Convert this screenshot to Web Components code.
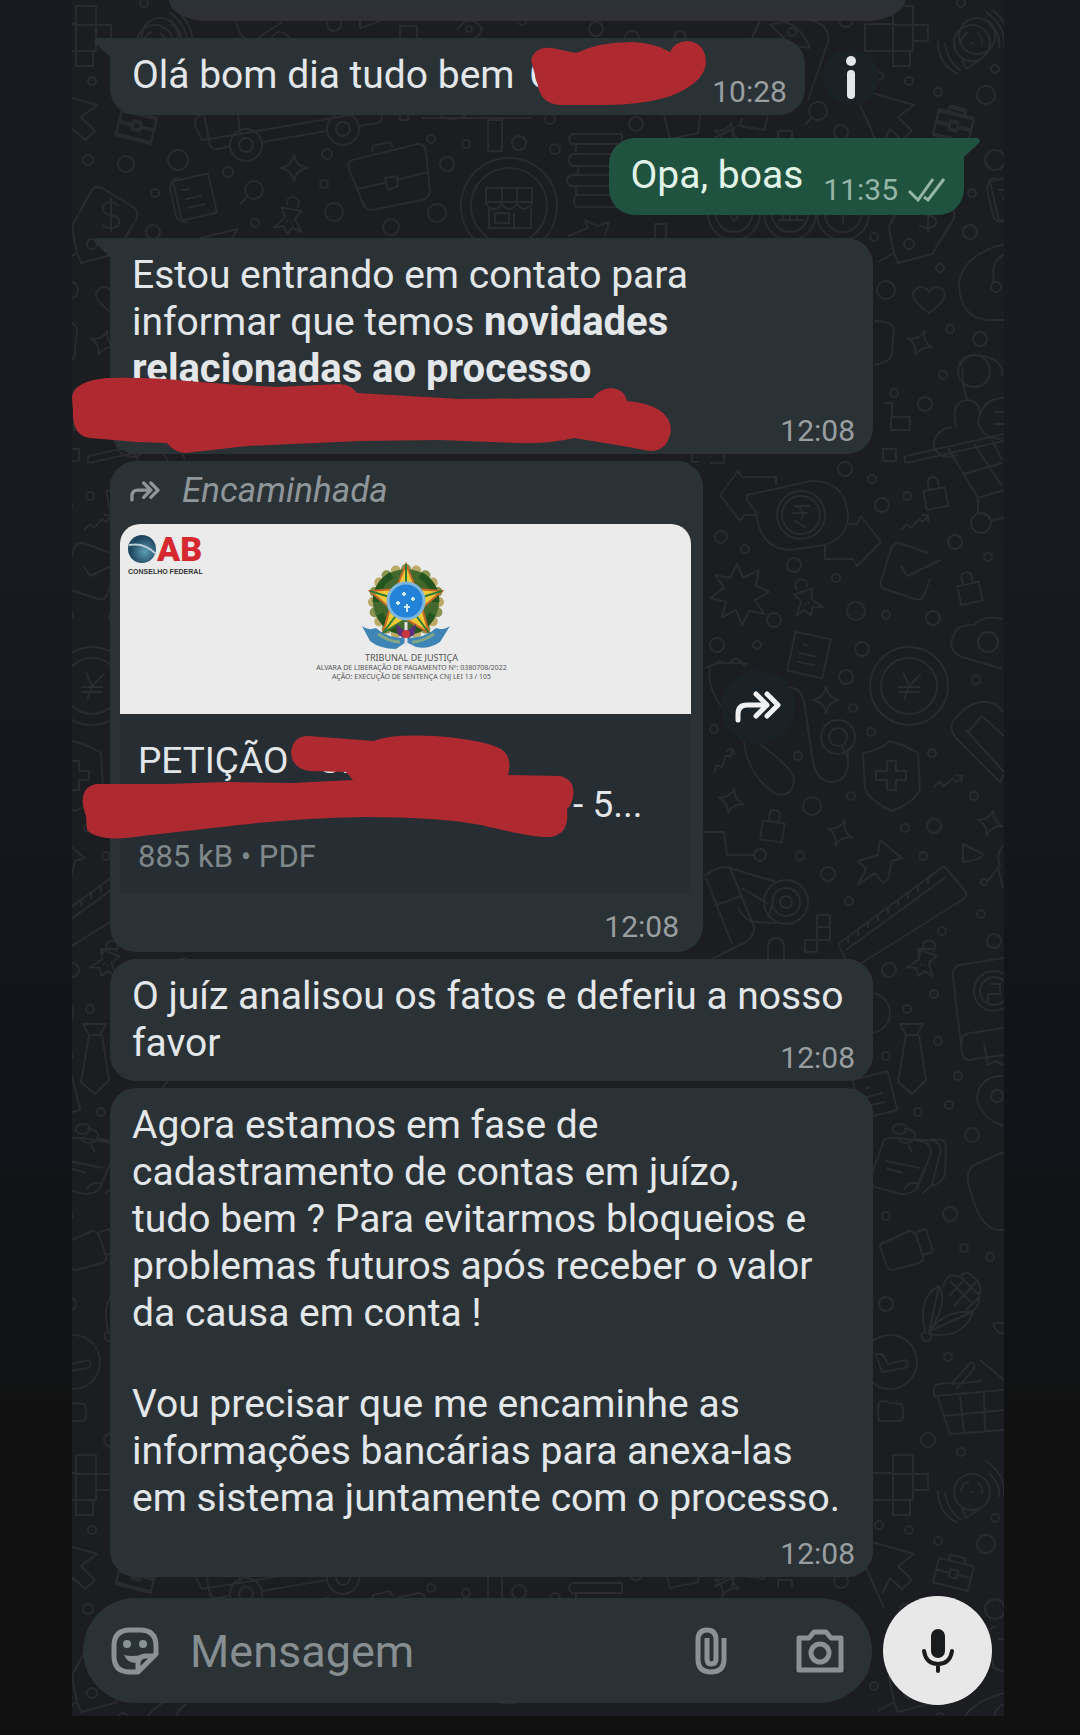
<!DOCTYPE html>
<html lang="pt-BR">
<head>
<meta charset="utf-8">
<meta name="viewport" content="width=device-width, initial-scale=1">
<title>Conversa</title>
<style>
  body {
    margin: 0;
    min-height: 100vh;
    background: linear-gradient(#181a1f 0, #171a1f 30%, #11151a 60%, #111 85%);
    color: #e3e7ea;
    font: 39px/47px Roboto, "Noto Sans", sans-serif;
  }

  b {
    font-size: 40px;
    line-height: 44px;
  }

  .name {
    display: inline-block;
    box-sizing: border-box;
    width: 168px;
    padding-left: 5px;
  }
</style>
</head>
<body>
<chat-screen>
  <cut-bubble></cut-bubble>

  <chat-row>
    <chat-bubble time="10:28" tail="left" inline>
      Olá bom dia tudo bem <span class="name">C</span>
      <red-scribble slot="over" box="420 2 178 67" d="M421 22Q425 8 442 10L466 15Q490 4 522 4Q545 5 560 14Q565 3 578 3Q596 5 596 26Q593 46 558 59Q530 67 495 67H451Q431 66 428 48Z"></red-scribble>
    </chat-bubble>
    <round-action icon="info" label="Informações"></round-action>
  </chat-row>

  <chat-row out class="apart">
    <chat-bubble time="11:35" tail="right" inline out>Opa, boas</chat-bubble>
  </chat-row>

  <chat-row class="apart">
    <chat-bubble time="12:08" tail="left">
      Estou entrando em contato para<br>informar que temos <b>novidades<br>relacionadas ao processo</b><br>&nbsp;
      <red-scribble slot="over" box="-40 136 604 82" d="M-38 159Q-36 143 -3 140Q40 139 77 143L130 147L167 149L230 146Q242 147 247 155L350 161L483 160Q490 150 502 150Q514 151 517 163Q560 167 561 192Q558 213 540 213Q520 209 464 200Q440 206 410 205L330 202L250 203L137 208L75 215Q64 214 57 205L27 204L-20 200Q-38 198 -37 173Z"></red-scribble>
    </chat-bubble>
  </chat-row>

  <chat-row>
    <document-bubble time="12:08" meta="885 kB • PDF">
      <span slot="title">PETIÇÃO - C.</span>
      <span slot="rest">- 5...</span>
      <red-scribble slot="over" box="-36 270 506 112" d="M181 291Q183 275 198 275L264 280Q280 273 325 275Q375 279 391 288Q403 296 398 314L450 315Q466 319 463 336Q461 345 457 348Q460 374 439 376Q425 377 371 364Q330 356 254 356Q190 357 129 364L32 375Q-10 382 -23 369L-24 355Q-34 328 -14 323H57L118 321L182 322L243 319L236 311L200 310Q182 308 181 291Z"></red-scribble>
    </document-bubble>
    <round-action icon="forward" label="Encaminhar" large></round-action>
  </chat-row>

  <chat-row>
    <chat-bubble time="12:08">O juíz analisou os fatos e deferiu a nosso<br>favor</chat-bubble>
  </chat-row>

  <chat-row>
    <chat-bubble time="12:08" stacked>
      <p>Agora estamos em fase de<br>cadastramento de contas em juízo,<br>tudo bem ? Para evitarmos bloqueios e<br>problemas futuros após receber o valor<br>da causa em conta !</p>
      <p>Vou precisar que me encaminhe as<br>informações bancárias para anexa-las<br>em sistema juntamente com o processo.</p>
    </chat-bubble>
  </chat-row>

  <message-composer slot="composer"></message-composer>
</chat-screen>

<script>
const FORWARD_ICON = `
  <svg viewBox="0 0 46 32" fill="none" stroke="currentColor" stroke-width="5" stroke-linecap="round" stroke-linejoin="round">
    <path d="M3 29V23Q3 14 12 14H32M21 3L32 14L21 25M32 3L43 14L32 25"/>
  </svg>`;

// ---- wallpaper -----------------------------------------------------------

const TILE_WIDTH = 817;
const TILE_HEIGHT = 1449;

// x, y, r
const DOTS = [
  [961,3,4],[909,81,4],[905,160,5],[943,164,8],[995,160,10],[228,172,5],[972,193,4],[970,232,7],[255,223,4],
  [327,154,5],[324,184,4],[334,212,9],[391,227,8],[437,213,9],[447,164,7],[431,139,4],[466,144,4],[519,143,7],
  [334,24,7],[522,21,4],[596,29,7],[632,38,7],[680,36,5],[846,20,7],[995,69,4],[986,95,9],[938,92,4],[879,76,4],
  [841,132,7],[636,124,7],[550,119,5],[555,149,5],[874,237,4],[909,244,5],[940,268,4],[886,290,9],[950,329,4],
  [980,339,7],[943,375,4],[894,393,4],[925,404,7],[845,469,7],[872,479,4],[882,505,7],[907,496,4],[955,542,7],
  [988,557,4],[721,537,6],[745,549,4],[794,565,7],[836,578,4],[774,620,7],[856,611,9],[886,615,4],[933,618,7],
  [717,645,7],[757,645,4],[862,649,7],[846,677,7],[853,708,4],[871,732,4],[976,680,4],[798,756,4],[714,729,4],
  [932,753,4],[851,796,4],[974,796,4],[812,806,9],[905,828,4],[934,826,7],[923,856,4],[760,855,6],[800,856,4],
  [828,874,7],[849,901,4],[942,931,4],[981,914,4],[994,941,7],[984,882,3],[889,970,7],[934,994,4],[907,1009,4],
  [938,1041,4],[886,1056,4],[958,1076,4],[949,1105,4],[918,1112,4],[972,1135,7],[886,1216,4],[950,1214,7],
  [964,1248,4],[990,1257,4],[886,1304,7],[948,1357,4],[928,1440,7],
  // rings and coins
  [254,190,9],[818,111,9],[509,206,48],[509,206,38],[734,214,26],[734,214,18],[790,214,26],[790,214,18],
  [843,214,26],[843,214,18],[246,145,16],[246,145,7],[343,129,16],[343,129,7],[972,43,18],[801,515,24],
  [801,515,19],[909,686,39],[909,686,28],[838,737,17],[838,737,9],[786,902,22],[786,902,14],[786,902,6],
  [981,523,10],[988,642,10],[160,36,18],[974,371,16],[469,29,3],[792,32,4],[996,287,5],[994,991,20],[994,991,14],
  [997,1096,6],[890,1362,27],[870,1013,20]
];

// name, x, y, turn
const STAMPS = [
  ["sparkle",294,168,0],["sparkle",920,343,20],["sparkle",826,700,0],["sparkle",731,801,15],["sparkle",840,833,20],
  ["sparkle",990,823,15],["sparkle",727,135,20],
  ["lock",935,494,-10],["lock",969,589,-12],["lock",773,827,8],
  ["pin",290,218,10],["pin",806,600,-18],["pin",924,961,20],
  ["trend",915,524,0],["trend",724,762,-25],["trend",948,783,8],
  ["case",137,125,14],["case",954,123,14],
  ["note",195,197,-13],["note",809,655,12],["note",875,1095,-14]
];

const SHAPES = {
  sparkle: "M0-13Q2-2 13 0Q2 2 0 13Q-2 2-13 0Q-2-2 0-13Z",
  lock: "M-11-5H11V14H-11ZM-5-5V-12Q-5-17 0-17Q5-17 5-12V-5",
  pin: "M-10-9L10-9L5 0L14 12L4 9L0 16L-5 9L-14 12L-5 0ZM-5-12A6 6 0 1 1 5-12M-2 3V5M2 3V5",
  trend: "M-14 6L-8 0L-4 4L4-5L8-2L13-8M6-9L13-9V-2",
  case: "M-18-10H18V15H-18ZM-8-10V-16H8V-10M-18 2H-4M4 2H18M-4-2H4V6H-4Z",
  note: "M-18-20H18V20H-18ZM-8-9H-3M-10 0H8M-10 9H8"
};

const DOODLES = [
  // crossword blocks, speech waves
  "M893 6h20v45h-20zM893 25h20M913 25h15v16h-15zM893 51h17v15h-17zM865 24h28v27h-28z",
  "M962 59l4 10l14-9M961 43a11 11 0 0 1 8-11M977 33a11 11 0 0 1 5 12M971 43h2M989 24q12 12 10 24M986 12q20 14 18 34M945 43q2 18 16 28M938 41q0 24 20 33",
  "M170 20q14 12 12 26M176 10q18 16 16 32M236 21q2 14 12 20M258 38l24-16M272 38q6-12 18 0M360 20v8l20-7M400 26h17v20h-17z",
  "M457 30q12-18 25-2q-3 12-15 12M752 38l8-18M770 24l22 22l18 2q-8-20-24-26zM810 20q20 4 18 22l-20 58",
  // crown
  "M860 105l24 54M872 93l42 12l-16 12l14 14l-10 9l-12-11l-8 16",
  // skateboard
  "M196 128q-4-12 8-14l34 0l2 20l-38 6zM204 114l6 32q4 6 20 0M262 142l65-11M240 134l140-24q6 14-8 14l-13 2",
  "M400 115v5h8v-5M422 118h110M488 120h14v31h-14zM440 115q12 8 26 0",
  // briefcase
  "M352 160l66-16q7 0 8 8l4 40q-1 6-8 8l-50 10q-7 0-9-7l-14-34q-2-7 3-9zM372 152l1-6l17-4l3 6M357 189l28-6M397 180l31-8M385 178l12-2l1 10l-10 4z",
  "M247 197l-7 7M811 118l-6 7",
  // shop
  "M486 188h46v16q-8 10-15 0q-8 10-15 0q-8 10-16 0zM486 202h46M502 188v16M517 188v16M489 208v20h42v-20M495 213h14v10h-14zM514 213v15",
  // stack of books
  "M572 134h50v10h-50q-6-5 0-10M576 144v10h46M572 154h50v12h-50q-6-6 0-12M578 166v9h44M570 175h50v11h-50q-6-5 0-11M576 186v9h44M576 195h46v12h-46q-4-6 0-12",
  "M664 115l6 24l28-6l2-18M742 118l-2 8l24 4l4-14M714 138l20-10l-2 10M778 138v-7h14v7",
  "M568 236l20-8l-3-8l12 6l12-4l-4 14M655 238v-14h11v14M728 212q4-6 6-1q5-4 8 1l-8 9zM778 220h26M783 220v-10M790 220v-10M797 220v-10M843 205v18M834 214h18M200 238l38-9l-6 9",
  // price tag
  "M891 238l-2-12l20-36q3-5 10-2l30 18q8 5 4 14l-12 20M936 206q-9-8-16 0q-2 7 7 9q11 2 9 9q-7 8-17 1M928 198v34",
  "M996 178q-8 0-9 10l6 28q2 6 11 6M998 190h6",
  "M878 262l16-9l-4-20M894 253l4 10l34-9l18-30",
  // dial and heart
  "M1004 244q-44 12-45 42q2 34 32 34h13M1004 255q-14 6-10 27",
  "M929 313q-20-14-15-22q8-9 15 1q8-10 15-1q4 9-15 22ZM874 321q18 0 20 8l-2 22q2 10-18 14",
  // flower and cart
  "M960 366q6-14 22-10q22 4 20 20M963 367q-2 14 4 32M952 427q-20 4-18 20q6 14 24 8M956 428q-6-28 12-28q12 2 12 14M1004 398q-22 0-26 24q6 20 26 16M994 412h10M994 424h10M906 456l98-22M906 463l98-22M905 456v7M948 448l30 50l26-8M974 444l28 42M964 474l38-11M992 440l10 20M978 498v15M992 520l12-2",
  "M884 403h8v14h18v13h-19v-13M883 449h13v12h-13zM692 454v8h7M710 463h14v-12",
  // arrows around a note
  "M776 485v-8h-34l-4-6l-18 24l20 26l4-6h14M747 495l64-14q36-1 37 38q-2 20-24 26l-34 5q-30-1-34-38l-9-12zM825 544v15h28l4 7l24-24l-20-26l-4 8h-9",
  "M794 506h16M792 513h16M794 520l12 8M795 506q12 4 6 14",
  // burst
  "M737 564l6 14l16-8l-3 15l13 7l-14 8l9 14l-15-3l-7 14l-6-15l-14 7l4-15l-16-4l14-10l-9-13l15 3z",
  // tick box
  "M928 553l-28-10q-7-1-9 6l-10 32q-2 6 4 8l30 10q6 2 9-4l6-16M901 566l6 10l34-16",
  "M1002 619q-20-4-28 6q-18 0-20 10q-8 14 8 22l40 12M903 672l6 14l12-12M898 687h22M898 692h22M909 686l-5 14",
  "M706 668q10-8 42-4M710 668q-4 16 12 40l28 18M714 665q6-6 10-2M730 662q6-6 11-1l4 6M787 688q16-2 18 20l8 54q4 20 20 20q16-2 15-24v-10M842 746l6 12M744 742q4 34 32 52q18 4 18-16q-2-10-34-34",
  // shield, plaster
  "M863 753q20-4 26-12q16 4 29 12l2 36q-4 12-28 22q-22-10-27-22zM887 761h9v10h10v9h-10v10h-9v-10h-11v-9h11z",
  "M984 702q12 0 19 10M984 702q-16 0-30 18q-6 8 2 18l44 44l4-8M966 730l38 42M982 716l22 20M968 732l14-16",
  // thumbtack and ruler
  "M880 840l22 18l-10 3l-4 18l-5 4l-8-10l-17 12l8-16l-8-8l20-6zM963 844v18q18-2 20-8zM1003 845q-8 12-3 20l-12 16M998 868l5 20",
  "M838 944l106-78l22 26q2 4-4 8l-102 64M838 944l8 16M846 950l100-73M848 937v6M858 930v6M868 922v6M878 915v6M888 908v6M898 900v6M908 893v6M918 886v6M928 878v6",
  // phone and camera
  "M703 832h21l3 23h26M704 876q18-12 26-8l46 14M730 868l22 54q6 10-6 20l-40 20M706 878l26 66M714 906l28-10M742 888l26 16M738 908q8 14 18 14l38 2M768 918l6-20",
  "M817 915h13v25h-13zM817 927h13M805 940h12v12h-12zM768 960v-14q2-8 8-8q8 0 8 10v12M920 955v-6h14",
  // tie
  "M900 1024h23l-6 11h-11zM906 1035l-8 47l14 12l14-14l-7-45",
  // passport
  "M1004 958l-44 7q-8 2-7 12l9 76q3 10 12 6l30-4M962 1045q-2-11 8-12l34-5M990 984h10v10h-12v8M984 1044l4 21l7-4l9 4M1003 1076q-24 0-26 22q2 18 26 28M1004 1152l-28 12q-10 4-8 18q10 44 28 48h8",
  // cards with a clip
  "M884 1140q3-3 16-2l24 4q8 3 7 12l-14 34q-4 6-16 6l-26-7q-6-3-4-10zM916 1139l18 2q8 2 6 12l-8 32l-10 9M930 1139l12 1q4 1 4 10l-1 24q-2 8-12 12M886 1161l34 7M886 1168l17 5M904 1190q4-10 16-6M900 1124a7 5 0 1 1-7 6a8 5 0 0 1 7-6M904 1129a9 7 0 1 1-6 10M908 1145l4 7",
  "M880 1247q0-4 5-5l24-11q5 0 7 4l7 21q1 5-4 7l-26 7q-4 0-6-3zM916 1232l10-3l7 23l-10 3",
  // corn
  "M926 1334q-10-34 12-48q12 14-10 48M929 1332l10-46M929 1334q12-24 44-22q-10 28-44 22M932 1330l40-18M926 1331a5 5 0 1 0 5 3M943 1287q4-16 16-10q8-8 14 0q10 6 6 20q0 12-8 14M949 1296l14-15M954 1306l24-26M966 1310l14-14M950 1281l24 24M961 1277l18 18",
  "M993 1323h11M993 1323q2 10 11 11",
  "M876 1354h6l6 10l18-4q4 4-1 8l-23 4zM879 1402l7-1l3 2l12 1q3 3 2 14q-2 3-5 3h-19q-2-8 0-19",
  // basket
  "M934 1387q2-4 18-4l18-20q5-1 4 6l-18 20M980 1360l24 20M934 1387v9l70-6M937 1396l13 38l54-4M960 1396l4 36M984 1393l1 38M944 1416l60-6M952 1384l30-3"
];

const wallpaperTemplate = document.createElement("template");

wallpaperTemplate.innerHTML = `
  <style>
    :host {
      display: block;
      position: absolute;
      inset: 0;
      overflow: hidden;
    }

    svg {
      display: block;
      width: 100%;
      height: 100%;
      fill: none;
      stroke: #2a2b2f;
      stroke-width: 2;
      stroke-linejoin: round;
    }
  </style>
  <svg aria-hidden="true">
    <g transform="translate(-72)">
      <g id="tile"></g>
      <use href="#tile" x="-${TILE_WIDTH}"/>
      <use href="#tile" x="${TILE_WIDTH}"/>
      <use href="#tile" y="${TILE_HEIGHT}"/>
      <use href="#tile" x="-${TILE_WIDTH}" y="${TILE_HEIGHT}"/>
    </g>
  </svg>
`;

class ChatWallpaper extends HTMLElement {
  constructor() {
    super();

    const shadowRoot = this.attachShadow({ mode: "open" });
    shadowRoot.appendChild(wallpaperTemplate.content.cloneNode(true));

    const dots = DOTS.map(([x, y, r]) => `<circle cx="${x}" cy="${y}" r="${r}"/>`);
    const stamps = STAMPS.map(([name, x, y, turn]) => `<path transform="translate(${x} ${y}) rotate(${turn})" d="${SHAPES[name]}"/>`);
    const doodles = DOODLES.map((d) => `<path d="${d}"/>`);
    shadowRoot.querySelector("#tile").innerHTML = [...dots, ...stamps, ...doodles].join("");
  }
}

// ---- screen --------------------------------------------------------------

const screenTemplate = document.createElement("template");

screenTemplate.innerHTML = `
  <style>
    :host {
      display: block;
      padding: 0 76px 18px 72px;
    }

    .panel {
      position: relative;
      background: #1b1d21;
    }

    main {
      position: relative;
      display: flex;
      flex-direction: column;
      gap: 7px;
      padding: 0 40px 19px 38px;
    }

    ::slotted(.apart) {
      margin-top: 16px;
    }
  </style>
  <div class="panel">
    <chat-wallpaper></chat-wallpaper>
    <main><slot></slot></main>
    <slot name="composer"></slot>
  </div>
`;

class ChatScreen extends HTMLElement {
  constructor() {
    super();
    this.attachShadow({ mode: "open" }).appendChild(screenTemplate.content.cloneNode(true));
  }
}

class CutBubble extends HTMLElement {
  constructor() {
    super();
    this.attachShadow({ mode: "open" }).innerHTML = `
      <style>
        :host {
          display: block;
          height: 21px;
          margin: 0 59px 10px;
          border-radius: 0 0 40px 40px / 0 0 21px 21px;
          background: linear-gradient(#2b3236, #302f35);
        }
      </style>
    `;
  }
}

class ChatRow extends HTMLElement {
  constructor() {
    super();
    this.attachShadow({ mode: "open" }).innerHTML = `
      <style>
        :host {
          display: flex;
          align-items: center;
          gap: 18px;
        }

        :host([out]) {
          justify-content: flex-end;
        }
      </style>
      <slot></slot>
    `;
  }
}

// ---- bubbles -------------------------------------------------------------

const bubbleTemplate = document.createElement("template");

bubbleTemplate.innerHTML = `
  <style>
    :host {
      display: grid;
      position: relative;
      box-sizing: border-box;
      width: min(763px, 100%);
      padding: 14px 18px 6px 22px;
      border-radius: 26px;
      background: #2b3236;
      color: #e3e7ea;
    }

    :host([inline]) {
      display: flex;
      align-items: flex-end;
      gap: 20px;
      width: auto;
    }

    :host([out]) {
      padding-bottom: 8px;
      background: #1f5340;
      color: #e2f3ea;
    }

    :host([tail="left"]) {
      border-top-left-radius: 0;
    }

    :host([tail="right"]) {
      border-top-right-radius: 0;
    }

    .text {
      grid-area: 1 / 1;
      margin-bottom: 8px;
    }

    :host([inline]:not([out])) .text {
      margin-bottom: 10px;
    }

    :host([stacked]) .text {
      margin-bottom: 15px;
    }

    .stamp {
      grid-area: 1 / 1;
      place-self: end;
      display: flex;
      align-items: center;
      gap: 10px;
      font-size: 30px;
      line-height: 34px;
      color: #999ea1;
    }

    :host([stacked]) .stamp {
      grid-area: 2 / 1;
    }

    :host([out]) .stamp {
      color: #94b6a8;
    }

    .ticks {
      display: none;
      width: 38px;
      height: 26px;
    }

    :host([out]) .ticks {
      display: block;
    }

    .tail {
      display: none;
      position: absolute;
      top: 0;
      width: 17px;
      height: 20px;
      fill: #2b3236;
    }

    :host([tail="left"]) .tail {
      display: block;
      right: calc(100% - 1px);
    }

    :host([tail="right"]) .tail {
      display: block;
      left: calc(100% - 1px);
      transform: scaleX(-1);
      fill: #1f5340;
    }

    ::slotted(p) {
      margin: 0 0 44px;
    }

    ::slotted(p:last-of-type) {
      margin: 0;
    }
  </style>
  <svg class="tail" viewBox="0 0 17 20"><path d="M17 0H3Q-1 1 1 5L14 17Q16 19 17 20Z"/></svg>
  <div class="text"><slot></slot></div>
  <div class="stamp">
    <time></time>
    <svg class="ticks" viewBox="0 0 38 26" fill="none" stroke="currentColor" stroke-width="3"><path d="M1 14L10 23L25 2M16 20L20 23L36 2"/></svg>
  </div>
  <slot name="over"></slot>
`;

class ChatBubble extends HTMLElement {
  constructor() {
    super();

    const shadowRoot = this.attachShadow({ mode: "open" });
    shadowRoot.appendChild(bubbleTemplate.content.cloneNode(true));
    shadowRoot.querySelector("time").textContent = this.getAttribute("time");
  }
}

class RedScribble extends HTMLElement {
  constructor() {
    super();

    const box = this.getAttribute("box");
    const [x, y, width, height] = box.split(" ");
    this.attachShadow({ mode: "open" }).innerHTML = `
      <style>
        :host {
          display: block;
          position: absolute;
          z-index: 1;
          left: ${x}px;
          top: ${y}px;
          width: ${width}px;
          height: ${height}px;
        }

        svg {
          display: block;
          fill: #af2a30;
        }
      </style>
      <svg viewBox="${box}" aria-hidden="true"><path d="${this.getAttribute("d")}"/></svg>
    `;
  }
}

// Leaves of the wreath around the coat of arms
function wreath() {
  let leaves = "";
  for (let i = 0; i < 20; i++) {
    const angle = (i * 18 - 90) * Math.PI / 180;
    const x = 44 + 33 * Math.cos(angle);
    const y = 40 + 33 * Math.sin(angle);
    leaves += `<circle cx="${x.toFixed(1)}" cy="${y.toFixed(1)}" r="5" fill="${i % 2 ? "#bba968" : "#8b9351"}"/>`;
  }
  return leaves;
}

const documentTemplate = document.createElement("template");

documentTemplate.innerHTML = `
  <style>
    :host {
      display: block;
      position: relative;
      box-sizing: border-box;
      width: min(593px, 80%);
      padding: 10px 12px 8px 10px;
      border-radius: 26px;
      background: #2b3236;
    }

    header {
      display: flex;
      align-items: center;
      gap: 22px;
      padding: 0 10px 13px;
      font-size: 35px;
      line-height: 40px;
      font-style: italic;
      color: #8f9699;
    }

    header svg {
      width: 30px;
      height: 21px;
    }

    .preview {
      display: grid;
      aspect-ratio: 3;
      overflow: hidden;
      border-radius: 20px 20px 0 0;
      background: #ebebeb;
      color: #555;
      font-family: "Noto Sans", sans-serif;
      text-align: center;
    }

    .logo {
      grid-area: 1 / 1;
      place-self: start;
      padding: 7px 8px;
    }

    .mark {
      display: flex;
      align-items: center;
      height: 36px;
      color: #d5282f;
      font: 900 34px/36px Roboto, sans-serif;
    }

    .mark svg {
      width: 29px;
      height: 30px;
    }

    .council {
      font: bold 7px/9px "Liberation Sans", sans-serif;
      color: #333;
    }

    .sheet {
      grid-area: 1 / 1;
      justify-self: center;
      padding-top: 38px;
    }

    .sheet svg {
      display: block;
      width: 88px;
      height: 88px;
      margin: 0 auto;
    }

    .caption {
      padding: 2px 0 0 12px;
      font-size: 7px;
      line-height: 9px;
    }

    .caption strong {
      display: block;
      font-weight: normal;
      font-size: 9px;
      line-height: 11px;
    }

    .body {
      padding: 25px 18px 20px;
      background: #262e34;
    }

    .title {
      font-size: 37px;
      line-height: 44px;
      white-space: nowrap;
    }

    .rest {
      display: flex;
      padding-left: 435px;
    }

    .meta {
      margin-top: 13px;
      font-size: 31px;
      line-height: 34px;
      color: #7f878b;
    }

    time {
      display: block;
      padding: 16px 12px 0;
      font-size: 30px;
      line-height: 34px;
      text-align: right;
      color: #999ea1;
    }
  </style>
  <header>${FORWARD_ICON}<span>Encaminhada</span></header>
  <div class="preview">
    <div class="logo">
      <div class="mark">
        <svg viewBox="0 0 29 30">
          <defs>
            <radialGradient id="globe" cx="0.6" cy="0.6"><stop offset="0" stop-color="#5d9db5"/><stop offset="1" stop-color="#1f4860"/></radialGradient>
          </defs>
          <circle cx="14" cy="15" r="14" fill="url(#globe)"/>
          <path d="M1 11Q16 8 28 20" fill="none" stroke="#b9cfd8" stroke-width="2"/>
        </svg>AB
      </div>
      <div class="council">CONSELHO FEDERAL</div>
    </div>
    <div class="sheet">
      <svg viewBox="0 0 88 88">
        ${wreath()}
        <circle cx="44" cy="40" r="33" fill="#42682b"/>
        <path d="M14 40A30 30 0 0 1 30 13M74 40A30 30 0 0 0 58 13M18 52Q24 66 36 68M70 52Q64 66 52 68" fill="none" stroke="#24551f" stroke-width="7"/>
        <path d="M44 2L54 27L80 29L60 46L67 71L44 57L21 71L28 46L8 29L34 27Z" fill="#f0c935" stroke="#c9682c" stroke-width="2"/>
        <path d="M44 2V57L21 71L44 40L8 29M44 40L80 29M44 40L67 71" fill="none" stroke="#2f7a34" stroke-width="2"/>
        <circle cx="44" cy="39" r="18" fill="#2383d8" stroke="#7fb7df" stroke-width="3"/>
        <path d="M42 30v4M40 32h4M51 35v4M49 37h4M36 39v4M34 41h4M45 42v8M42 45h6" stroke="#cde8fa" stroke-width="2"/>
        <path d="M0 64Q6 69 14 66Q24 76 44 76Q64 76 74 66Q82 69 88 64L78 80Q66 88 54 85L44 80L34 87Q18 87 8 79Z" fill="#3e84b5"/>
        <path d="M16 72Q28 80 38 80M72 72Q60 80 50 80" fill="none" stroke="#83a887" stroke-width="3"/>
        <path d="M34 62L44 70L54 62L52 73L44 77L36 73Z" fill="#5d2e7e"/>
        <path d="M44 60V84" stroke="#e5dfe8" stroke-width="3"/>
        <circle cx="44" cy="72" r="4" fill="#c7373d"/>
      </svg>
      <div class="caption">
        <strong>TRIBUNAL DE JUSTIÇA</strong>
        ALVARA DE LIBERAÇÃO DE PAGAMENTO Nº: 0380708/2022<br>
        AÇÃO: EXECUÇÃO DE SENTENÇA CNJ LEI 13 / 105
      </div>
    </div>
  </div>
  <div class="body">
    <div class="title"><slot name="title"></slot></div>
    <div class="title rest"><slot name="rest"></slot></div>
    <div class="meta"></div>
  </div>
  <time></time>
  <slot name="over"></slot>
`;

class DocumentBubble extends HTMLElement {
  constructor() {
    super();

    const shadowRoot = this.attachShadow({ mode: "open" });
    shadowRoot.appendChild(documentTemplate.content.cloneNode(true));
    shadowRoot.querySelector("time").textContent = this.getAttribute("time");
    shadowRoot.querySelector(".meta").textContent = this.getAttribute("meta");
  }
}

// ---- controls ------------------------------------------------------------

const ACTION_ICONS = {
  info: `<svg viewBox="0 0 46 46" fill="#e4e7e9"><circle cx="23" cy="7" r="5"/><rect x="19" y="16" width="8" height="29" rx="4"/></svg>`,
  forward: FORWARD_ICON
};

class RoundAction extends HTMLElement {
  constructor() {
    super();

    this.attachShadow({ mode: "open" }).innerHTML = `
      <style>
        :host {
          display: block;
        }

        button {
          display: grid;
          place-items: center;
          width: 56px;
          height: 56px;
          padding: 0;
          border: none;
          border-radius: 50%;
          background: #1b2227;
          color: #f0f1f2;
          cursor: pointer;
        }

        :host([large]) button {
          width: 74px;
          height: 74px;
        }

        svg {
          width: 46px;
          height: 46px;
        }
      </style>
      <button type="button" aria-label="${this.getAttribute("label")}">${ACTION_ICONS[this.getAttribute("icon")]}</button>
    `;
  }
}

const composerTemplate = document.createElement("template");

composerTemplate.innerHTML = `
  <style>
    :host {
      display: flex;
      position: relative;
      align-items: center;
      gap: 11px;
      padding: 0 12px 11px 11px;
    }

    form {
      display: flex;
      flex: 1;
      align-items: center;
      min-width: 0;
      height: 105px;
      box-sizing: border-box;
      padding: 0 28px;
      border-radius: 53px;
      background: #2b3236;
    }

    input {
      flex: 1;
      min-width: 0;
      margin: 0 24px 0 31px;
      padding: 2px 0 0;
      border: none;
      outline: none;
      background: none;
      color: #e3e7ea;
      font: 45px/54px Roboto, sans-serif;
    }

    input::placeholder {
      color: #868e91;
      opacity: 1;
    }

    button {
      flex: none;
      display: grid;
      place-items: center;
      padding: 0;
      border: none;
      background: none;
      color: #8a9295;
      cursor: pointer;
    }

    form svg {
      width: 48px;
      height: 48px;
    }

    .camera {
      margin-left: 61px;
    }

    .mic {
      width: 109px;
      height: 109px;
      border-radius: 50%;
      background: #e8e8e8;
      color: #1a1b1c;
    }
  </style>
  <form>
    <button type="button" aria-label="Figurinhas">
      <svg viewBox="0 0 48 48" fill="none" stroke="currentColor" stroke-width="5" stroke-linejoin="round">
        <path d="M27 45H19Q3 45 3 29V19Q3 3 19 3H29Q45 3 45 19V27Q36 36 27 45ZM27 44V37Q27 29 35 29H44"/>
        <g fill="currentColor" stroke="none"><circle cx="16" cy="17" r="4"/><circle cx="32" cy="17" r="4"/><path d="M13 28Q20 30 31 28L27 36Q17 37 13 28Z"/></g>
      </svg>
    </button>
    <input type="text" placeholder="Mensagem" aria-label="Mensagem">
    <button type="button" aria-label="Anexar">
      <svg viewBox="0 0 48 48" fill="none" stroke="currentColor" stroke-width="5">
        <path d="M37 11V32Q37 45 24 45Q11 45 11 32V13Q11 3 20 3Q29 3 29 13V32Q29 37 24 37Q20 37 20 32V11"/>
      </svg>
    </button>
    <button type="button" class="camera" aria-label="Câmera">
      <svg viewBox="0 0 48 48" fill="none" stroke="currentColor" stroke-width="5" stroke-linejoin="round">
        <path d="M3 11H13L18 5H30L35 11H45V43H3Z"/><circle cx="24" cy="26" r="9"/>
      </svg>
    </button>
  </form>
  <button type="button" class="mic" aria-label="Gravar áudio">
    <svg width="34" height="46" viewBox="0 0 34 46" fill="none" stroke="currentColor" stroke-width="4" stroke-linecap="round">
      <rect x="10" y="1" width="14" height="29" rx="7" fill="currentColor" stroke="none"/>
      <path d="M3 23Q5 36 17 36Q29 36 31 23M17 37V43"/>
    </svg>
  </button>
`;

class MessageComposer extends HTMLElement {
  constructor() {
    super();
    this.attachShadow({ mode: "open" }).appendChild(composerTemplate.content.cloneNode(true));
  }
}

window.customElements.define("chat-wallpaper", ChatWallpaper);
window.customElements.define("chat-screen", ChatScreen);
window.customElements.define("cut-bubble", CutBubble);
window.customElements.define("chat-row", ChatRow);
window.customElements.define("chat-bubble", ChatBubble);
window.customElements.define("red-scribble", RedScribble);
window.customElements.define("document-bubble", DocumentBubble);
window.customElements.define("round-action", RoundAction);
window.customElements.define("message-composer", MessageComposer);
</script>
</body>
</html>
